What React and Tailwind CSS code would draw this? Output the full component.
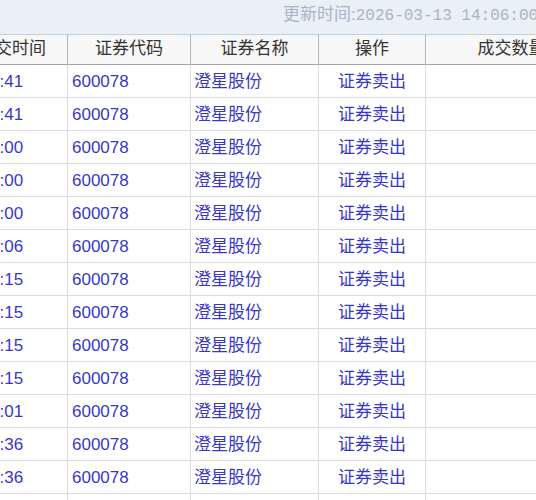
const rows = [
  '14:05:41',
  '14:05:41',
  '14:04:00',
  '14:04:00',
  '14:04:00',
  '14:02:06',
  '14:01:15',
  '14:01:15',
  '14:01:15',
  '14:01:15',
  '13:58:01',
  '13:55:36',
  '13:55:36',
  '13:52:20',
]

const font = { fontFamily: '"Liberation Sans", "Noto Sans CJK SC", sans-serif' }

export default function App() {
  return (
    <div className="h-[500px] w-[536px] overflow-hidden bg-white text-[17px]" style={font}>
      <div className="h-[35px] whitespace-nowrap border-b border-[#c3ceda] bg-[#eaf1f6] pl-[283px] pt-[3px] text-[17px] leading-[24px] text-[#a9b5c5]">
        更新时间:
        <span className="text-[16px]" style={{ fontFamily: '"Liberation Mono", monospace' }}>
          2026-03-13 14:06:00
        </span>
      </div>
      <table className="ml-[-44px] w-[641px] table-fixed border-collapse">
        <colgroup>
          <col className="w-[111px]" />
          <col className="w-[123px]" />
          <col className="w-[128px]" />
          <col className="w-[107px]" />
          <col className="w-[172px]" />
        </colgroup>
        <thead>
          <tr className="h-[29px] border-b border-[#a3a3a3] bg-[#f7f7f7] text-[#333]">
            {['成交时间', '证券代码', '证券名称', '操作', '成交数量'].map((h) => (
              <th key={h} className="border-x border-[#b4b4b4] p-0 text-center font-normal leading-[28px]">
                {h}
              </th>
            ))}
          </tr>
        </thead>
        <tbody className="text-[#3838c8]">
          {rows.map((t, i) => (
            <tr key={i} className="h-[33px] border-b border-[#dcdcdc]">
              <td className="whitespace-nowrap border-x border-[#dcdcdc] pl-0 pr-[5px] pt-[2px]">{t}</td>
              <td className="border-x border-[#dcdcdc] pl-[4px] pr-[5px] pt-[2px]">600078</td>
              <td className="border-x border-[#dcdcdc] pl-[3px] pr-[5px] pt-[2px]">澄星股份</td>
              <td className="border-x border-[#dcdcdc] px-[5px] pt-[2px] text-center">证券卖出</td>
              <td className="border-x border-[#dcdcdc] px-[5px] pt-[2px]"></td>
            </tr>
          ))}
        </tbody>
      </table>
    </div>
  )
}
